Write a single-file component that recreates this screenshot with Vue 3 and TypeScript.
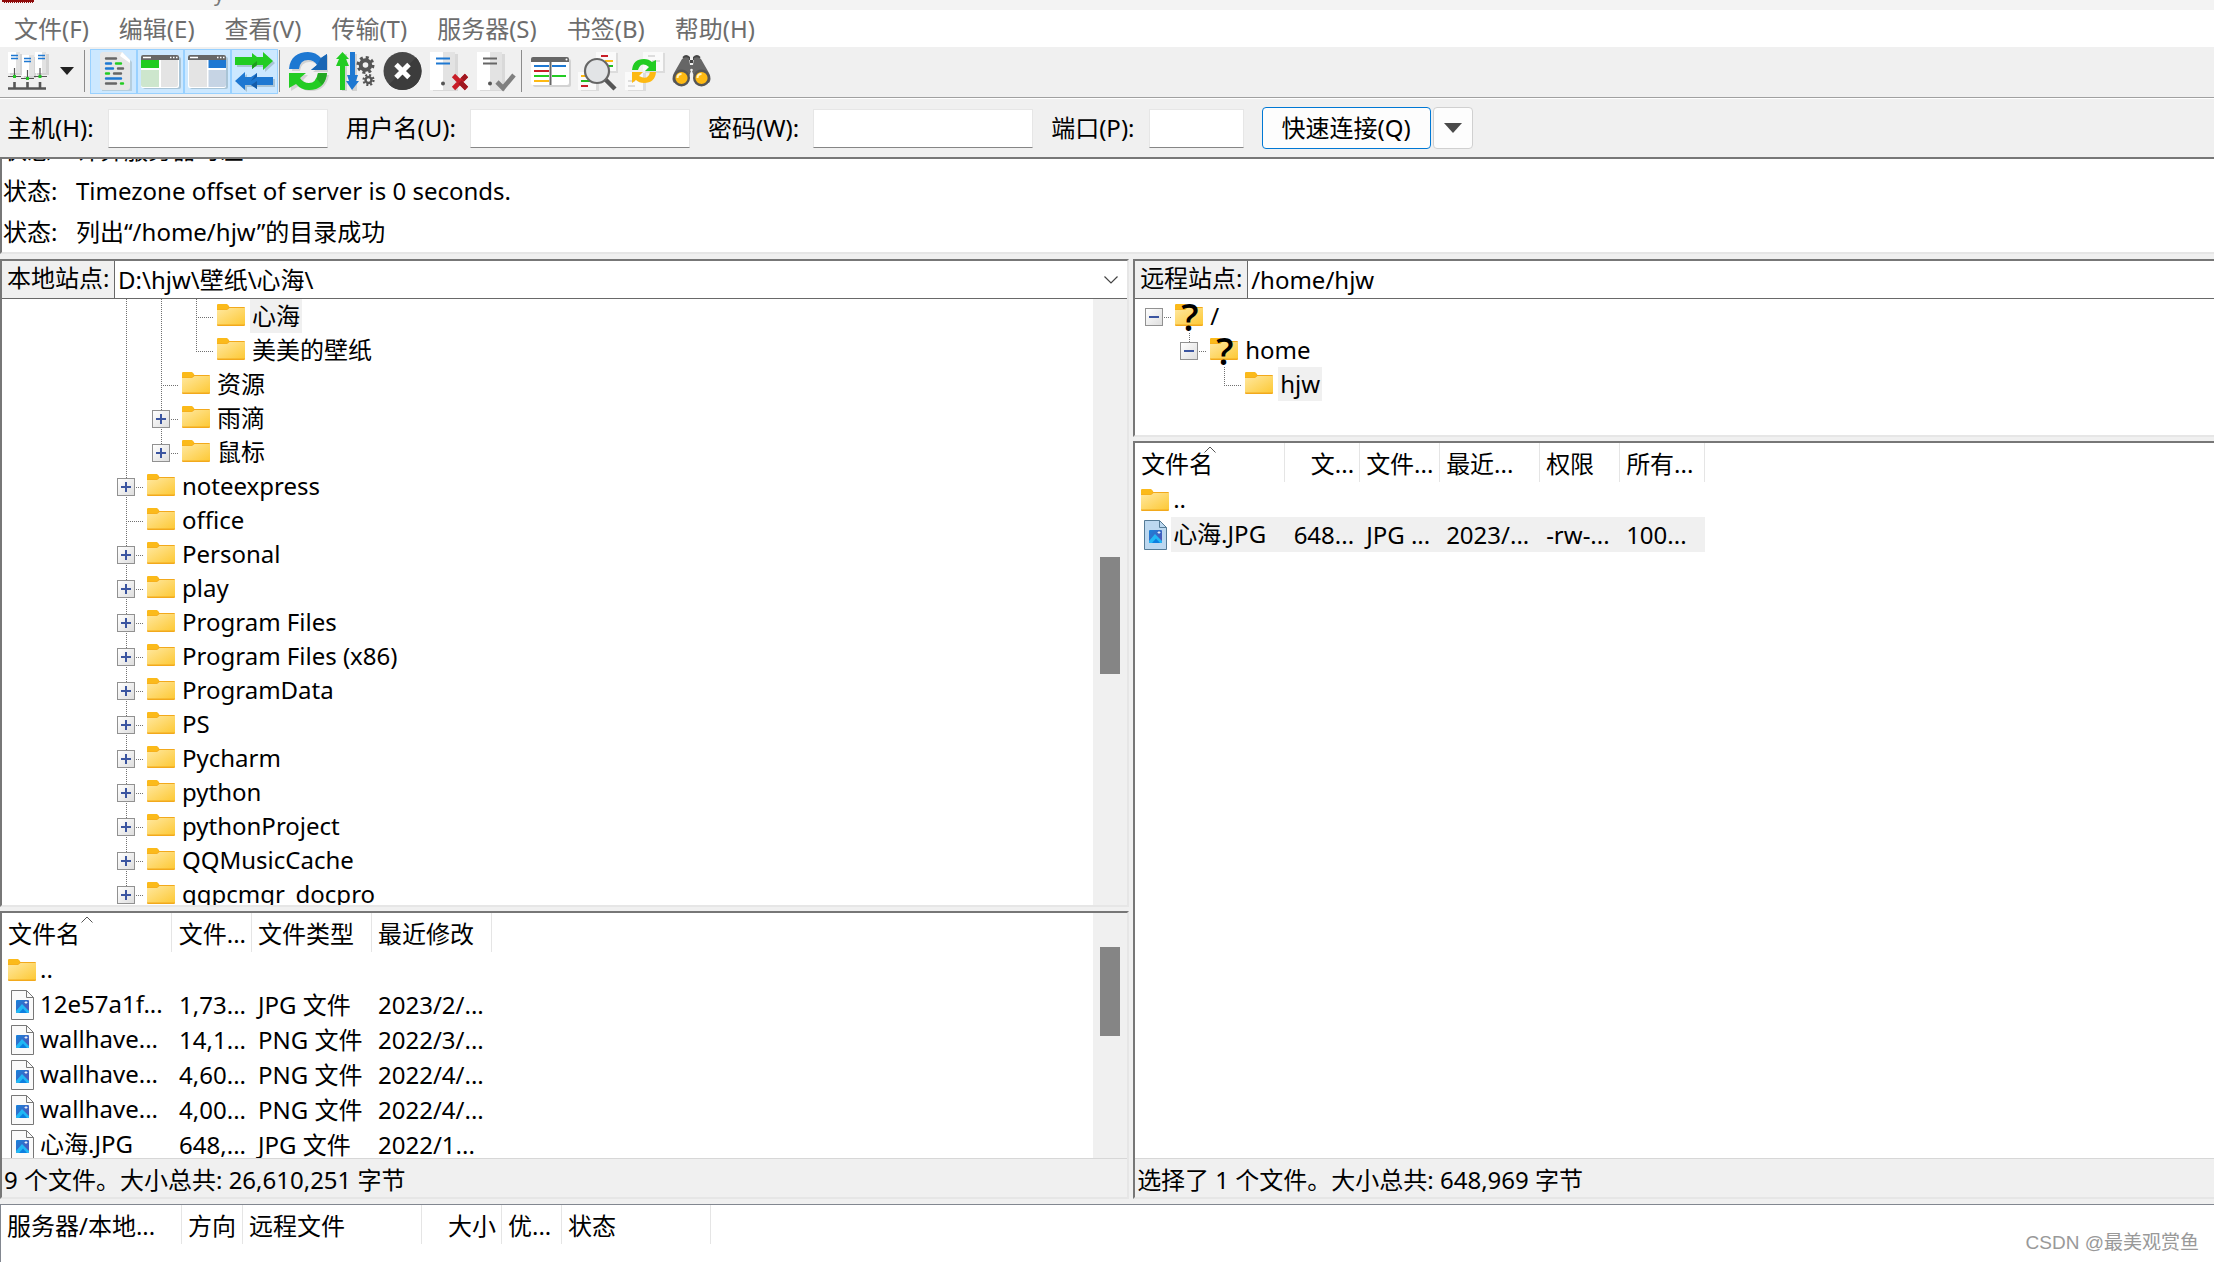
<script setup lang="ts">
import { ref } from 'vue'

interface TreeNode {
  name: string
  guides: number
  toggle?: '+' | '-'
  above?: boolean
  below?: boolean
  unknown?: boolean
  selected?: boolean
}

interface FileRow {
  name: string
  folder?: boolean
  selected?: boolean
  cells: string[]
}

interface Column {
  label: string
  width: number
  right?: boolean
  sorted?: boolean
}

const menus = ['文件(F)', '编辑(E)', '查看(V)', '传输(T)', '服务器(S)', '书签(B)', '帮助(H)']

const logs = [
  '计算服务器时差...',
  'Timezone offset of server is 0 seconds.',
  '列出“/home/hjw”的目录成功',
]

const localTree: TreeNode[] = [
  { name: '心海', guides: 2, above: true, below: true, selected: true },
  { name: '美美的壁纸', guides: 2, above: true },
  { name: '资源', guides: 1, above: true, below: true },
  { name: '雨滴', guides: 1, toggle: '+', above: true, below: true },
  { name: '鼠标', guides: 1, toggle: '+', above: true },
  { name: 'noteexpress', guides: 0, toggle: '+', above: true, below: true },
  { name: 'office', guides: 0, above: true, below: true },
  ...[
    'Personal', 'play', 'Program Files', 'Program Files (x86)', 'ProgramData', 'PS', 'Pycharm',
    'python', 'pythonProject', 'QQMusicCache', 'qqpcmgr_docpro',
  ].map((name): TreeNode => ({ name, guides: 0, toggle: '+', above: true, below: true })),
]

const remoteTree: TreeNode[] = [
  { name: '/', guides: 0, toggle: '-', unknown: true },
  { name: 'home', guides: 1, toggle: '-', above: true, unknown: true },
  { name: 'hjw', guides: 2, above: true, selected: true },
]

const localColumns: Column[] = [
  { label: '文件名', width: 170, sorted: true },
  { label: '文件...', width: 80, right: true },
  { label: '文件类型', width: 120 },
  { label: '最近修改', width: 120 },
]

const localFiles: FileRow[] = [
  { name: '..', folder: true, cells: ['', '', ''] },
  { name: '12e57a1f...', cells: ['1,73...', 'JPG 文件', '2023/2/...'] },
  { name: 'wallhave...', cells: ['14,1...', 'PNG 文件', '2022/3/...'] },
  { name: 'wallhave...', cells: ['4,60...', 'PNG 文件', '2022/4/...'] },
  { name: 'wallhave...', cells: ['4,00...', 'PNG 文件', '2022/4/...'] },
  { name: '心海.JPG', cells: ['648,...', 'JPG 文件', '2022/1...'] },
]

const remoteColumns: Column[] = [
  { label: '文件名', width: 150, sorted: true },
  { label: '文...', width: 75, right: true },
  { label: '文件...', width: 80 },
  { label: '最近...', width: 100 },
  { label: '权限', width: 80 },
  { label: '所有...', width: 85 },
]

const remoteFiles: FileRow[] = [
  { name: '..', folder: true, cells: ['', '', '', '', ''] },
  { name: '心海.JPG', selected: true, cells: ['648...', 'JPG ...', '2023/...', '-rw-...', '100...'] },
]

const queueColumns: Column[] = [
  { label: '服务器/本地...', width: 181 },
  { label: '方向', width: 61 },
  { label: '远程文件', width: 179 },
  { label: '大小', width: 80, right: true },
  { label: '优...', width: 60 },
  { label: '状态', width: 149 },
]

const trees = { local: localTree, remote: remoteTree }
const lists = {
  local: { columns: localColumns, files: localFiles },
  remote: { columns: remoteColumns, files: remoteFiles },
}

const sum = (columns: Column[]) => columns.reduce((total, c) => total + c.width, 0)

const host = ref('')
const user = ref('')
const password = ref('')
const port = ref('')
const localPath = ref('D:\\hjw\\壁纸\\心海\\')
const remotePath = ref('/home/hjw')
</script>

<template>
  <div class="app">
    <svg class="defs" aria-hidden="true">
      <defs>
        <linearGradient id="folder-face" x1="0" y1="0" x2="1" y2="1">
          <stop offset="0" stop-color="#ffe8a0" />
          <stop offset="1" stop-color="#fdc936" />
        </linearGradient>
        <linearGradient id="photo" x1="0" y1="0" x2="1" y2="1">
          <stop offset="0" stop-color="#1583dc" />
          <stop offset="1" stop-color="#5b4fb0" />
        </linearGradient>
        <symbol id="folder" viewBox="0 0 28 22">
          <path d="M0 1.5Q0 0 1.5 0H9q1.500 0 2.300 1.500L12.500 3H27q1 0 1 1v17q0 1-1 1H1q-1 0-1-1Z" fill="#f2a91c" />
          <path d="M0 1.500Q0 0 1.500 0H9q1.500 0 2.300 1.500L12 3l-2 2.500H0Z" fill="#fbba1a" />
          <path d="M0 6h10l2.500-2H28v16.500H0Z" fill="url(#folder-face)" />
        </symbol>
        <symbol id="page" viewBox="0 0 23 30">
          <path d="M.5.5h15l7 7v22H.5Z" fill="var(--page-fill)" stroke="var(--page-line)" />
          <path d="M15.500.5v7h7" fill="none" stroke="var(--page-line)" />
          <rect x="5" y="10" width="13" height="13" rx="1" fill="url(#photo)" />
          <path d="m5 21 6-7 7 7v1q0 1-1 1H6q-1 0-1-1Z" fill="#22b8f5" />
          <path d="m8 23 4-4.500 4 4.500Z" fill="#0d7fe0" />
          <path d="M15 11v3M13.500 12.500h3" stroke="#fff" stroke-width=".8" />
        </symbol>
      </defs>
    </svg>

    <header class="title"><i class="logo"></i><span class="caption">y</span></header>

    <nav class="menu">
      <button v-for="m in menus" :key="m" type="button">{{ m }}</button>
    </nav>

    <div class="toolbar">
      <button type="button" class="tool" aria-label="站点管理器">
        <svg viewBox="0 0 40 40">
          <path d="M3 3h12v21H3zM17 6h12v21H17zM30 3h12v21H30z" fill="#d4d4d4" />
          <path d="M1 1h12v21H1zM15 4h12v21H15zM28 1h11v21H28z" fill="#fff" />
          <path d="M9 1h4v21H9zM22 4h5v21h-5zM35 1h4v21h-4z" fill="#e2e2e2" />
          <path d="M4 4.500h7M4 7.500h7M31 4.500h7M31 7.500h7M17 7.500h7M17 10.500h7" stroke="#1e78d2" stroke-width="1.300" />
          <path d="M7.500 17v8M20.500 19v8M33 17v8M1 25.500h13M14 27.500h13M27 25.500h13" stroke="#555" stroke-width="1.200" />
          <path d="M6 24h3v3H6zM19 26h3v3h-3zM31.500 24h3v3h-3z" fill="#23c423" />
          <path d="M7.500 31v6M20.500 31v6M33 31v6M1 37.500h38" stroke="#555" stroke-width="2.600" />
        </svg>
      </button>
      <button type="button" class="drop" aria-label="站点列表">
        <svg width="14" height="8" viewBox="0 0 14 8"><path d="M0 0h14L7 8Z" fill="#222" /></svg>
      </button>
      <i class="sep"></i>
      <button type="button" class="tool on" aria-label="消息日志">
        <svg viewBox="0 0 40 40">
          <path d="M8 3h22l8 8v29H8Z" fill="#b5cede" />
          <path d="M9 1h19l8 8v27q0 3-3 3H9q-3 0-3-3V4q0-3 3-3Z" fill="#e6e6e6" />
          <path d="M28 1l8 8v3L26 5Z" fill="#fff" />
          <g fill="none" stroke-width="2.400" stroke-linecap="round">
            <path d="M12 7.500h10M24 17.500h5M20 22.500h7M12 32.500h10" stroke="#666" />
            <path d="M12 12.500h5M12 17.500h7M12 27.500h15" stroke="#1e78d2" />
            <path d="M22 12.500h5M12 22.500h3M27 32.500h2" stroke="#2c2" />
          </g>
        </svg>
      </button>
      <button type="button" class="tool on" aria-label="本地目录树">
        <svg viewBox="0 0 40 40">
          <rect x="2" y="6" width="38" height="32" rx="2" fill="#a9c4d6" />
          <rect y="4" width="38" height="33" rx="2" fill="#fff" />
          <path d="M0 9V6q0-2 2-2h34q2 0 2 2v3Z" fill="#666" />
          <path d="M2 6.500h8M29 6.500h1.500M32 6.500h1.500M35 6.500h1.500" stroke="#fff" stroke-width="1.300" />
          <path d="M0 9h18v8H0Z" fill="#2c2" />
          <path d="M0 19h18v17H2q-2 0-2-2Z" fill="#cde6cd" />
          <path d="M20 9h17v25q0 2-2 2H20Z" fill="#e4e4e4" />
        </svg>
      </button>
      <button type="button" class="tool on" aria-label="远程目录树">
        <svg viewBox="0 0 40 40">
          <rect x="2" y="6" width="38" height="32" rx="2" fill="#a9c4d6" />
          <rect y="4" width="38" height="33" rx="2" fill="#fff" />
          <path d="M0 9V6q0-2 2-2h34q2 0 2 2v3Z" fill="#666" />
          <path d="M2 6.500h8M29 6.500h1.500M32 6.500h1.500M35 6.500h1.500" stroke="#fff" stroke-width="1.300" />
          <path d="M20.500 9H38v8H20.500Z" fill="#1e78d2" />
          <path d="M20.500 19H38v15q0 2-2 2H20.500Z" fill="#c6d4e4" />
          <path d="M1 9h18v27H3q-2 0-2-2Z" fill="#e4e4e4" />
        </svg>
      </button>
      <button type="button" class="tool on" aria-label="传输队列">
        <svg viewBox="0 0 40 40">
          <path d="M2 8h28V3l10 9-10 9v-5H2ZM40 28H12v-5L2 32l10 9v-5h28Z" fill="#a9c4d6" />
          <path d="M0 6h17V2l5 4h6V1l10 9-10 9v-5h-6l-5 4v-4H0Z" fill="#2c2" />
          <path d="m17 14 5-4v4l-5 4Z" fill="#1e9e1e" />
          <path d="M38 26H22v-4l-6 4h-6v-5L0 30l10 9v-5h6l6 4v-4h16Z" fill="#1e78d2" />
          <path d="m16 30 6-8v4Zm0 4 6-4v8Z" fill="#155ca8" />
        </svg>
      </button>
      <i class="sep"></i>
      <button type="button" class="tool" aria-label="刷新">
        <svg viewBox="0 0 40 40">
          <path d="M3 20C4 8 12 3 21 3q8 0 12 5l6-4v17H24l6-5q-3-5-9-5-9 0-10 9ZM40 24q-3 16-18 16-8 0-12-5l-8 5V24h17l-5 5q3 4 8 4 7 0 9-9Z" fill="#d2d2d2" />
          <path d="M0 18C1 6 9 1 19 1q8 0 13 6l6-4v16H22l6-5q-3-5-9-5-8 0-9 9Z" fill="#1e78d2" />
          <path d="m22 19 6-5 4-7 6-4v16Z" fill="#1966b4" />
          <path d="M38 22q-2 17-18 17-8 0-13-6l-7 4V22h17l-6 5q3 5 9 5 7 0 9-10Z" fill="#2c2" />
          <path d="M29 22h9q-1 8-5 12l-5-6Z" fill="#23a823" />
        </svg>
      </button>
      <button type="button" class="tool" aria-label="处理队列">
        <svg viewBox="0 0 40 40">
          <path d="M6 3h5v37H6zM16 3h5v37h-5z" fill="#d2d2d2" />
          <path d="M6.500 1 13 8l-3 0 3 7H9v24H4V15H0l3-7H0Z" fill="#2c2" />
          <path d="M14 1h5v23h3l-2 6h3l-7 9-6-9h3l-2-6h3Z" fill="#1e78d2" />
          <circle cx="29.500" cy="14" r="7.500" fill="none" stroke="#555" stroke-width="3" stroke-dasharray="3 2.890" />
          <circle cx="29.500" cy="14" r="4.800" fill="none" stroke="#555" stroke-width="4" />
          <circle cx="32.500" cy="29" r="5" fill="none" stroke="#555" stroke-width="2.200" stroke-dasharray="2 1.930" />
          <circle cx="32.500" cy="29" r="3" fill="none" stroke="#555" stroke-width="2.400" />
        </svg>
      </button>
      <button type="button" class="tool" aria-label="取消">
        <svg viewBox="0 0 40 40">
          <circle cx="19.500" cy="20" r="19" fill="#484848" />
          <path d="M33 6.500A19 19 0 0 1 6 33.500Z" fill="#3c3c3c" />
          <path d="m13 13.500 13 13M26 13.500l-13 13" stroke="#fff" stroke-width="5" />
        </svg>
      </button>
      <button type="button" class="tool" aria-label="断开连接">
        <svg viewBox="0 0 40 40">
          <path d="M3 3h25v37H3Z" fill="#d9d9d9" />
          <path d="M0 1h13v38H0Z" fill="#fff" /><path d="M13 1h12v38H13Z" fill="#e3e3e3" />
          <path d="M6 7.500h14M6 12.500h14" stroke="#1e78d2" stroke-width="2" />
          <circle cx="13" cy="32.500" r="2" fill="#555" />
          <path d="m23.500 24.500 13 13M36.500 24.500l-13 13" stroke="#c81e28" stroke-width="4.600" />
          <path d="M30 31l6.500 6.500M36.500 24.500l-4 4" stroke="#a01820" stroke-width="4.600" />
        </svg>
      </button>
      <button type="button" class="tool" aria-label="重新连接">
        <svg viewBox="0 0 40 40">
          <path d="M3 3h25v37H3Z" fill="#d9d9d9" />
          <path d="M0 1h13v38H0Z" fill="#fff" /><path d="M13 1h12v38H13Z" fill="#e3e3e3" />
          <path d="M6 7.500h14M6 12.500h14" stroke="#666" stroke-width="2" />
          <circle cx="13" cy="32.500" r="2" fill="#555" />
          <path d="m20 31 6 6 11-13" fill="none" stroke="#808080" stroke-width="4.600" />
        </svg>
      </button>
      <i class="sep"></i>
      <button type="button" class="tool" aria-label="文件名过滤">
        <svg viewBox="0 0 40 40">
          <rect x="2" y="8" width="38" height="28" rx="2" fill="#d2d2d2" />
          <rect y="6" width="38" height="28" rx="2" fill="#fff" />
          <path d="M0 11V8q0-2 2-2h34q2 0 2 2v3Z" fill="#666" />
          <circle cx="35.500" cy="8.500" r="1" fill="#fff" />
          <g stroke-width="2">
            <path d="M3 15h15M21 15h14" stroke="#1e78d2" /><path d="M3 20h15" stroke="#c81e28" />
            <path d="M3 25h15M21 25h14" stroke="#2c2" /><path d="M3 30h15" stroke="#fdb913" />
            <path d="M19.500 11v23" stroke="#666" />
          </g>
        </svg>
      </button>
      <button type="button" class="tool" aria-label="目录对比">
        <svg viewBox="0 0 40 40">
          <path d="M20 2h20v20H20ZM3 22h18v18H3Z" fill="#dcdcdc" />
          <path d="M18 1h20v19H18ZM0 21h18v18H0Z" fill="#fafafa" />
          <g stroke-width="2">
            <path d="M23 5h7M3 35h7" stroke="#c81e28" /><path d="M27 10h8M3 25h6" stroke="#fdb913" />
            <path d="M30 15h5M3 30h10" stroke="#2b2" />
          </g>
          <path d="m27 28 10 10" stroke="#555" stroke-width="4.500" />
          <circle cx="19" cy="20" r="12" fill="#e2e4e6" stroke="#666" stroke-width="2.200" />
        </svg>
      </button>
      <button type="button" class="tool" aria-label="同步浏览">
        <svg viewBox="0 0 40 40">
          <path d="M20 2h20v20H20ZM3 22h18v18H3Z" fill="#dcdcdc" />
          <path d="M18 1h20v19H18ZM0 21h18v18H0Z" fill="#fafafa" />
          <path d="M23 5h7M27 10h8M3 35h7M3 30h7" stroke="#ddd" stroke-width="2" />
          <path d="M7 19Q8 8 19 8q5 0 8 3l4-2v11H20l4-4q-8-6-11 3Z" fill="#2c2" />
          <path d="M31 21q-1 11-12 11-5 0-8-3l-4 3V21h11l-4 4q9 5 11-4Z" fill="#fdb913" />
        </svg>
      </button>
      <button type="button" class="tool" aria-label="查找文件">
        <svg viewBox="0 0 40 40">
          <path d="M12 9 10.500 6Q14 2 18 6v6h3V6q4-4 7.500 0L27 9Z" fill="#444" />
          <path d="M2 22 10 8q3-3 7-1l1 7h3l1-7q4-2 7 1l8 14q3 6 0 10l-14-4-3-8h-1l-3 8-14 4q-3-4 0-10Z" fill="#666" />
          <circle cx="19.500" cy="19" r="1.300" fill="#eee" />
          <circle cx="9.500" cy="27" r="7.300" fill="#fdb913" stroke="#555" stroke-width="2.400" />
          <circle cx="29.500" cy="27" r="7.300" fill="#fdb913" stroke="#555" stroke-width="2.400" />
          <path d="M5.500 27q0-4 4-4M25.500 27q0-4 4-4" fill="none" stroke="#fff3c4" stroke-width="2" />
        </svg>
      </button>
    </div>

    <form class="quick" @submit.prevent>
      <label for="host">主机(H):</label><input id="host" v-model="host" class="wide" type="text" />
      <label for="user">用户名(U):</label><input id="user" v-model="user" class="wide" type="text" />
      <label for="password">密码(W):</label><input id="password" v-model="password" class="wide" type="password" />
      <label for="port">端口(P):</label><input id="port" v-model="port" class="port" type="text" />
      <button type="submit" class="connect">快速连接(Q)</button>
      <button type="button" class="history" aria-label="历史记录">
        <svg width="18" height="10" viewBox="0 0 18 10"><path d="M0 0h18L9 10Z" fill="#4a4a4a" /></svg>
      </button>
    </form>

    <section class="log sunken">
      <ul>
        <li v-for="line in logs" :key="line"><span class="kind">状态:</span><span>{{ line }}</span></li>
      </ul>
    </section>

    <main class="split">
      <section v-for="side in (['local', 'remote'] as const)" :key="side" class="side" :class="side">
        <div class="tree-pane sunken">
          <div class="path">
            <label :for="side + '-path'">{{ side === 'local' ? '本地站点:' : '远程站点:' }}</label>
            <div class="combo">
              <select v-if="side === 'local'" id="local-path" v-model="localPath">
                <option>{{ localPath }}</option>
              </select>
              <input v-else id="remote-path" v-model="remotePath" type="text" />
              <svg v-if="side === 'local'" width="14" height="8" viewBox="0 0 14 8">
                <path d="m.5.5 6.500 6.500 6.500-6.500" fill="none" stroke="#444" stroke-width="1.200" />
              </svg>
            </div>
          </div>
          <div class="pane-body">
            <ul class="tree">
              <li v-for="node in trees[side]" :key="node.name">
                <i v-for="g in node.guides" :key="g" class="cell guide"></i>
                <i class="cell" :class="{ above: node.above, below: node.below }">
                  <button v-if="node.toggle" type="button" class="toggle" :aria-label="node.name">
                    <svg width="16" height="16" viewBox="0 0 16 16">
                      <path :d="node.toggle === '+' ? 'M3 8h10M8 3v10' : 'M3 8h10'" stroke="#3b55a0" stroke-width="2" />
                    </svg>
                  </button>
                </i>
                <span class="icon"><svg width="28" height="22"><use href="#folder" /></svg><b v-if="node.unknown">?</b></span>
                <span class="name" :class="{ selected: node.selected }">{{ node.name }}</span>
              </li>
            </ul>
            <div v-if="side === 'local'" class="scroll"><i class="thumb tree-thumb"></i></div>
          </div>
        </div>

        <div class="list-pane sunken">
          <div class="pane-body">
            <div class="list">
              <table :style="{ width: sum(lists[side].columns) + 'px' }">
                <colgroup><col v-for="c in lists[side].columns" :key="c.label" :style="{ width: c.width + 'px' }" /></colgroup>
                <thead>
                  <tr>
                    <th v-for="c in lists[side].columns" :key="c.label" :class="{ right: c.right }">
                      {{ c.label }}
                      <svg v-if="c.sorted" class="sort" width="12" height="7" viewBox="0 0 12 7">
                        <path d="m.5 6.500 5.500-5.500 5.500 5.500" fill="none" stroke="#555" />
                      </svg>
                    </th>
                  </tr>
                </thead>
                <tbody>
                  <tr v-for="(f, i) in lists[side].files" :key="i" :class="{ selected: f.selected }">
                    <td class="file">
                      <div>
                        <svg v-if="f.folder" class="dir" width="28" height="22"><use href="#folder" /></svg>
                        <svg v-else class="doc" width="23" height="30"><use href="#page" /></svg>
                        <span>{{ f.name }}</span>
                      </div>
                    </td>
                    <td v-for="(cell, n) in f.cells" :key="n" :class="{ right: n === 0 }">{{ cell }}</td>
                  </tr>
                </tbody>
              </table>
            </div>
            <div v-if="side === 'local'" class="scroll"><i class="thumb list-thumb"></i></div>
          </div>
          <footer class="status">
            {{ side === 'local' ? '9 个文件。大小总共: 26,610,251 字节' : '选择了 1 个文件。大小总共: 648,969 字节' }}
          </footer>
        </div>
      </section>
    </main>

    <section class="queue">
      <table :style="{ width: sum(queueColumns) + 'px' }">
        <colgroup><col v-for="c in queueColumns" :key="c.label" :style="{ width: c.width + 'px' }" /></colgroup>
        <thead>
          <tr><th v-for="c in queueColumns" :key="c.label" :class="{ right: c.right }">{{ c.label }}</th></tr>
        </thead>
      </table>
      <span class="watermark">CSDN @最美观赏鱼</span>
    </section>
  </div>
</template>

<style>
body {
  margin: 0;
  overflow: hidden;
}
</style>

<style scoped>
.app {
  display: flex;
  flex-direction: column;
  height: 100vh;
  background: #f0f0f0;
  color: #000;
  font: 24px/34px "Noto Sans", "Noto Sans CJK SC", sans-serif;
  white-space: nowrap;
}
.app * {
  box-sizing: border-box;
}
.defs {
  position: absolute;
  width: 0;
  height: 0;
}
button,
input,
select {
  font: inherit;
  color: inherit;
}
button {
  display: flex;
  align-items: center;
  justify-content: center;
  padding: 0;
  border: 0;
  background: none;
}
ul {
  margin: 0;
  padding: 0;
  list-style: none;
}

.title {
  display: flex;
  align-items: flex-start;
  flex: none;
  height: 10px;
  overflow: hidden;
  background: #f3f3f3;
}
.logo {
  width: 32px;
  height: 3px;
  margin-left: 2px;
  background: #8e0b0b;
  border-bottom: 1px dotted #f3f3f3;
}
.caption {
  margin: -16px 0 0 180px;
  font-size: 20px;
  line-height: 20px;
  color: #777;
}
.menu {
  display: flex;
  flex: none;
  gap: 4px;
  height: 37px;
  padding-left: 1px;
  background: #fff;
  color: #6d6d6d;
}
.menu button {
  padding: 0 13px;
}

.toolbar {
  display: flex;
  align-items: center;
  flex: none;
  height: 51px;
  padding: 0 0 2px 3px;
  border-bottom: 1px solid #a0a0a0;
}
.tool {
  width: 47px;
  height: 45px;
  flex: none;
}
.tool svg {
  width: 40px;
  height: 40px;
  overflow: visible;
}
.tool.on {
  background: #cce8ff;
  border: 1px solid #99d1ff;
}
.drop {
  width: 33px;
  height: 45px;
}
.sep {
  width: 1px;
  height: 42px;
  margin: 0 5px 0 1px;
  background: #8c8c8c;
}

.quick {
  display: flex;
  align-items: center;
  flex: none;
  height: 59px;
  padding-left: 7px;
  border-top: 1px solid #fff;
}
.quick input {
  height: 39px;
  padding: 0 6px;
  margin: 0 18px 0 14px;
  background: #fff;
  border: 1px solid #e6e6e6;
  border-bottom-color: #868686;
  border-radius: 0;
}
.wide {
  width: 220px;
}
.port {
  width: 95px;
}
.connect {
  width: 169px;
  height: 42px;
  background: #fdfdfd;
  border: 1px solid #0078d4;
  border-radius: 4px;
}
.history {
  width: 40px;
  height: 42px;
  margin-left: 2px;
  background: #fdfdfd;
  border: 1px solid #d0d0d0;
  border-radius: 4px;
}

.sunken {
  border: 2px solid;
  border-color: #777 #e6e6e6 #e6e6e6 #777;
  background: #fff;
}
.log {
  flex: none;
  height: 97px;
  border-right: 0;
  overflow: hidden;
}
.log ul {
  margin-top: -30px;
}
.log li {
  display: flex;
  height: 41px;
  line-height: 41px;
  padding-left: 1px;
}
.kind {
  width: 73px;
}

.split {
  display: flex;
  flex: 1;
  min-height: 0;
  padding: 5px 0;
  gap: 4px;
}
.side {
  display: flex;
  flex-direction: column;
  min-width: 0;
  gap: 4px;
}
.local {
  width: 51%;
}
.remote {
  flex: 1;
}
.remote .sunken {
  border-right: 0;
}
.tree-pane,
.list-pane {
  display: flex;
  flex-direction: column;
  min-height: 0;
}
.local .tree-pane,
.remote .list-pane {
  flex: 1;
}
.local .list-pane {
  flex: none;
  height: 288px;
}
.remote .tree-pane {
  flex: none;
  height: 178px;
}
.path {
  display: flex;
  flex: none;
  height: 38px;
  border-bottom: 1px solid #696969;
}
.path label {
  width: 113px;
  padding-left: 5px;
  background: #f0f0f0;
  border-right: 1px solid #696969;
}
.combo {
  display: flex;
  align-items: center;
  flex: 1;
  padding-right: 9px;
}
.combo select,
.combo input {
  flex: 1;
  min-width: 0;
  height: 36px;
  padding: 0 3px;
  border: 0;
  appearance: none;
  background: #fff;
}
.pane-body {
  display: flex;
  flex: 1;
  min-height: 0;
  overflow: hidden;
}
.tree,
.list {
  flex: 1;
  min-width: 0;
}
.local .tree {
  padding-left: 107px;
}
.remote .tree {
  padding-left: 2px;
}
.tree li {
  display: flex;
  height: 34px;
}
.cell {
  --dots-x: repeating-linear-gradient(90deg, #707070 0 1px, transparent 1px 2px);
  --dots-y: repeating-linear-gradient(#707070 0 1px, transparent 1px 2px);
  width: 35px;
  padding: 9px 0 0 8px;
  background: var(--dots-x) 17px 18px / 18px 1px no-repeat;
}
.cell.above {
  background: var(--dots-x) 17px 18px / 18px 1px no-repeat, var(--dots-y) 17px 0 / 1px 18px no-repeat;
}
.cell.above.below {
  background: var(--dots-x) 17px 18px / 18px 1px no-repeat, var(--dots-y) 17px 0 / 1px 34px no-repeat;
}
.cell.guide {
  background: var(--dots-y) 17px 0 / 1px 34px no-repeat;
}
.remote .cell.guide {
  background: none;
}
.toggle {
  width: 18px;
  height: 18px;
  border: 1px solid #919191;
  background: linear-gradient(135deg, #fff, #dedede);
}
.icon {
  position: relative;
  width: 28px;
  margin: 5px 5px 0 3px;
  line-height: 0;
}
.icon b {
  position: absolute;
  left: 6px;
  top: -7px;
  font: 600 38px/38px "Open Sans", "Noto Sans", sans-serif;
}
.name {
  padding: 0 2px;
}
.name.selected {
  background: #f0f0f0;
}
.scroll {
  flex: none;
  width: 34px;
  padding-left: 7px;
  background: #f0f0f0;
}
.thumb {
  display: block;
  width: 20px;
  background: #858585;
}
.tree-thumb {
  height: 117px;
  margin-top: 258px;
}
.list-thumb {
  height: 89px;
  margin-top: 34px;
}

table {
  table-layout: fixed;
  border-collapse: separate;
  border-spacing: 0;
}
th {
  position: relative;
  height: 39px;
  padding: 3px 6px 0;
  border-right: 1px solid #e5e5e5;
  font-weight: 400;
  text-align: left;
}
td {
  height: 35px;
  padding: 0 6px;
}
td.right {
  padding: 0 6px 0 0;
  text-align: right;
}
th.right {
  padding: 3px 5px 0 0;
  text-align: right;
}
.sort {
  position: absolute;
  left: calc(50% - 6px);
  top: 3px;
}
td.file {
  padding: 0 0 0 6px;
}
.file div {
  display: flex;
  align-items: center;
}
.dir {
  margin-right: 2px;
}
.doc {
  --page-fill: #fafafa;
  --page-line: #777;
  margin: 0 4px 0 3px;
}
.selected .doc {
  --page-fill: #bcd8f0;
  --page-line: #557b96;
}
.file span {
  flex: 1;
  height: 35px;
  padding-left: 2px;
}
.selected .file span,
.selected td:not(.file) {
  background: #f0f0f0;
}
.status {
  flex: none;
  height: 39px;
  padding: 4px 2px 0;
  background: #f0f0f0;
  border-top: 1px solid #d7d7d7;
}

.queue {
  position: relative;
  flex: none;
  height: 58px;
  border: solid #828790;
  border-width: 1px 0 0 1px;
  background: #fff;
}
.watermark {
  position: absolute;
  right: 15px;
  bottom: 5px;
  font: 19px/28px "Liberation Sans", "Noto Sans CJK SC", sans-serif;
  color: #999;
}
</style>
